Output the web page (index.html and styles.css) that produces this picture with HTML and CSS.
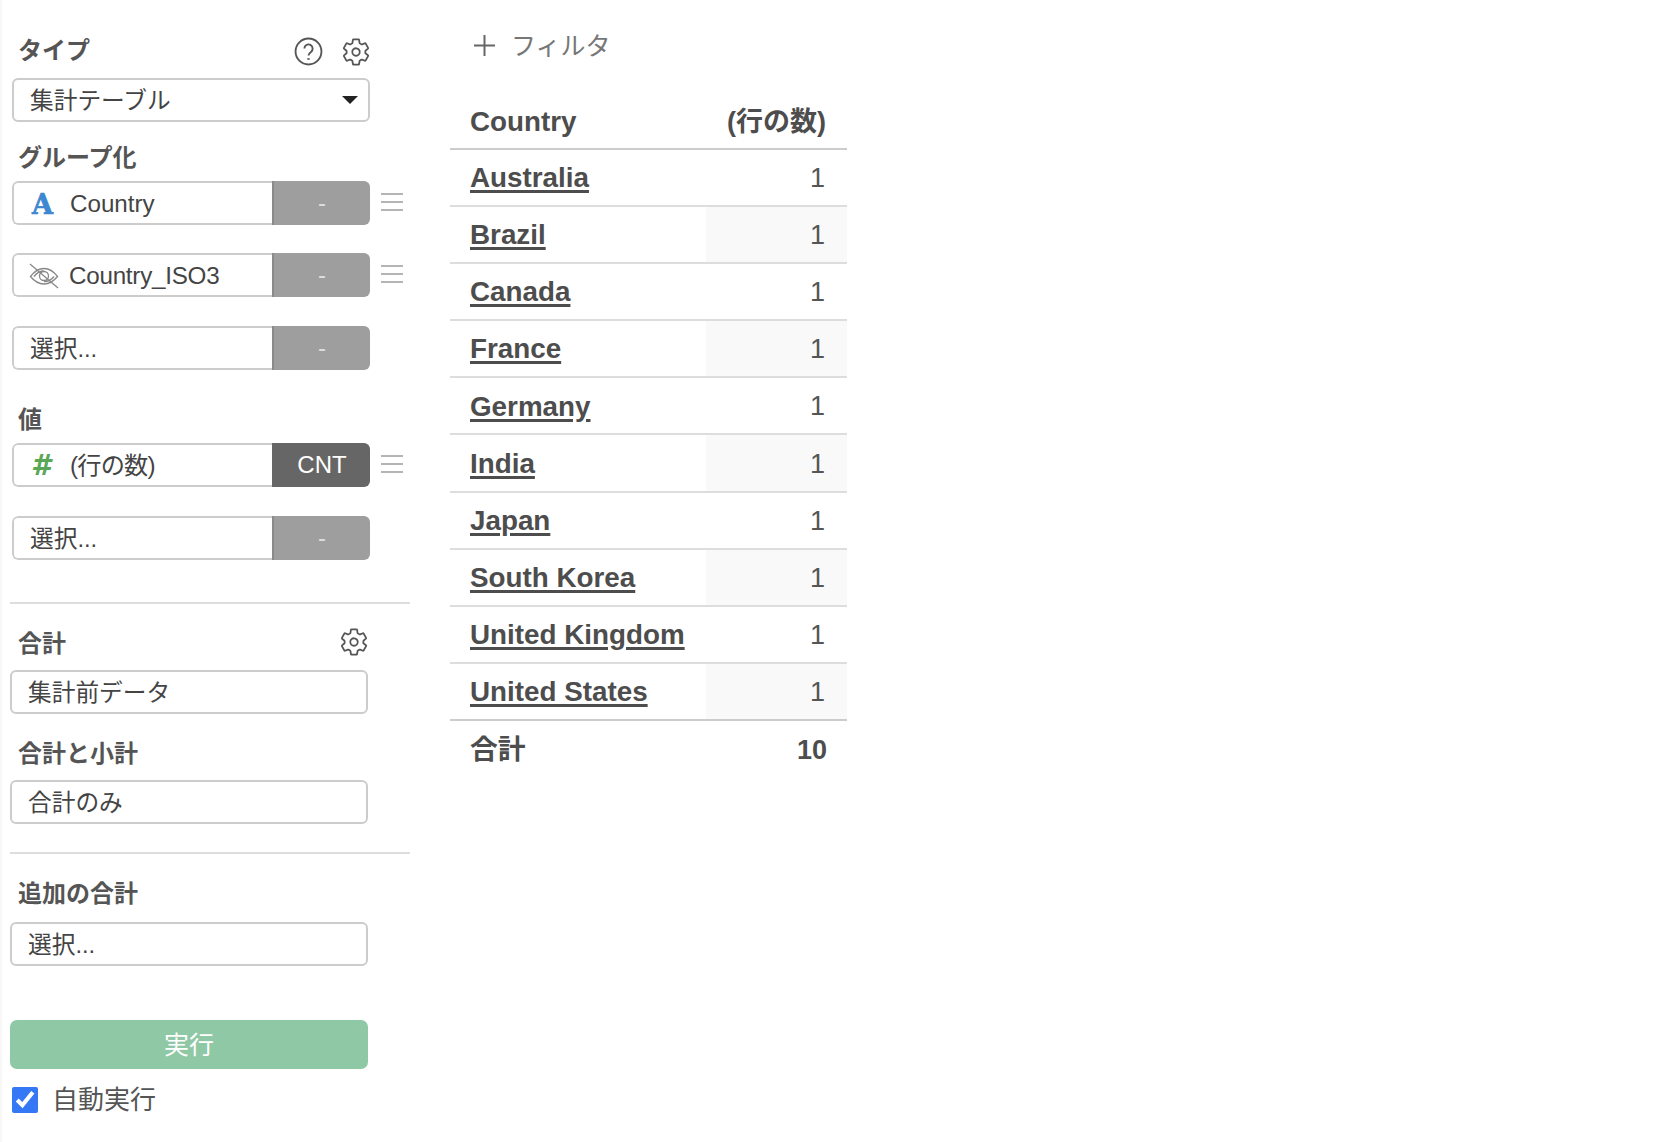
FILE: index.html
```html
<!DOCTYPE html>
<html lang="ja">
<head>
<meta charset="utf-8">
<title>集計テーブル</title>
<link rel="stylesheet" href="styles.css">
</head>
<body>
<div class="page">
  <aside class="side">
    <div class="inset">
      <div class="label-row top">
        <span class="label">タイプ</span>
        <span class="tools">
          <svg class="icon" viewBox="0 0 28 28"><circle cx="14" cy="14" r="12.5"/><path d="M10 11.200a4 4 0 1 1 6.400 3.200c-1.500 1-2.400 1.800-2.400 3.400"/><path class="dot" d="M14 20.400v1.600"/></svg>
          <svg class="gear" viewBox="0 0 512 512"><use href="#gear-shape"/></svg>
        </span>
      </div>
      <div class="select g13"><span>集計テーブル</span><i class="caret"></i></div>

      <div class="label-row g21"><span class="label">グループ化</span></div>
      <div class="pick-row g8">
        <div class="pick"><div class="field"><span class="type type-a">A</span><span>Country</span></div><div class="agg">-</div></div>
        <svg class="menu" viewBox="0 0 22 18"><path d="M0 1h22M0 9h22M0 17h22"/></svg>
      </div>
      <div class="pick-row g28">
        <div class="pick"><div class="field"><svg class="eye" viewBox="0 0 30 26"><path d="M1.500 13.500C6 7.500 10 5.500 15 5.500s9 2 13.500 8c-4.500 5.500-8.500 7.500-13.500 7.500s-9-2-13.500-7.500z"/><path d="M5 13.500C8 9.500 11 8 15 8M25 13.500c-3 4-6 5-10 5"/><circle cx="15" cy="13" r="4.500"/><path d="M1 1l28 24"/></svg><span class="iso">Country_ISO3</span></div><div class="agg">-</div></div>
        <svg class="menu" viewBox="0 0 22 18"><path d="M0 1h22M0 9h22M0 17h22"/></svg>
      </div>
      <div class="pick-row g29">
        <div class="pick"><div class="field plain"><span>選択...</span></div><div class="agg">-</div></div>
      </div>

      <div class="label-row g35"><span class="label">値</span></div>
      <div class="pick-row g8">
        <div class="pick"><div class="field"><span class="type type-n">#</span><span class="tight">(行の数)</span></div><div class="agg on">CNT</div></div>
        <svg class="menu" viewBox="0 0 22 18"><path d="M0 1h22M0 9h22M0 17h22"/></svg>
      </div>
      <div class="pick-row g29">
        <div class="pick"><div class="field plain"><span>選択...</span></div><div class="agg">-</div></div>
      </div>
    </div>

    <hr class="rule g42">

    <div class="label-row lower g25 total-head">
      <span class="label">合計</span>
      <svg class="gear" viewBox="0 0 512 512"><use href="#gear-shape"/></svg>
    </div>
    <div class="select g11"><span>集計前データ</span></div>

    <div class="label-row lower g25"><span class="label">合計と小計</span></div>
    <div class="select g11"><span>合計のみ</span></div>

    <hr class="rule g28">

    <div class="label-row lower g25"><span class="label">追加の合計</span></div>
    <div class="select g13"><span>選択...</span></div>

    <button class="run" type="button">実行</button>
    <label class="auto"><input type="checkbox" checked><span>自動実行</span></label>
  </aside>

  <main class="main">
    <div class="filter">
      <svg class="plus" viewBox="0 0 21 21"><path d="M0 10.500h21M10.500 0v21"/></svg>
      <span>フィルタ</span>
    </div>
    <div class="table">
      <div class="tr head"><div class="c1">Country</div><div class="c2">(行の数)</div></div>
      <div class="tr"><div class="c1"><a href="#">Australia</a></div><div class="c2">1</div></div>
      <div class="tr alt"><div class="c1"><a href="#">Brazil</a></div><div class="c2">1</div></div>
      <div class="tr"><div class="c1"><a href="#">Canada</a></div><div class="c2">1</div></div>
      <div class="tr alt"><div class="c1"><a href="#">France</a></div><div class="c2">1</div></div>
      <div class="tr"><div class="c1"><a href="#">Germany</a></div><div class="c2">1</div></div>
      <div class="tr alt"><div class="c1"><a href="#">India</a></div><div class="c2">1</div></div>
      <div class="tr"><div class="c1"><a href="#">Japan</a></div><div class="c2">1</div></div>
      <div class="tr alt"><div class="c1"><a href="#">South Korea</a></div><div class="c2">1</div></div>
      <div class="tr"><div class="c1"><a href="#">United Kingdom</a></div><div class="c2">1</div></div>
      <div class="tr alt last"><div class="c1"><a href="#">United States</a></div><div class="c2">1</div></div>
      <div class="tr total"><div class="c1">合計</div><div class="c2">10</div></div>
    </div>
  </main>
</div>
<svg class="defs" width="0" height="0"><defs><path id="gear-shape" d="M262.290 192.310a64 64 0 1057.400 57.400 64.130 64.130 0 00-57.400-57.400zM416.390 256a154.340 154.340 0 01-1.530 20.790l45.210 35.460a10.810 10.810 0 012.450 13.750l-42.770 74a10.810 10.810 0 01-13.140 4.590l-44.900-18.080a16.110 16.110 0 00-15.170 1.750A164.480 164.480 0 01325 400.800a15.940 15.940 0 00-8.820 12.140l-6.730 47.890a11.080 11.080 0 01-10.680 9.170h-85.540a11.110 11.110 0 01-10.690-8.870l-6.720-47.820a16.070 16.070 0 00-9-12.220 155.300 155.300 0 01-21.460-12.570 16 16 0 00-15.110-1.710l-44.890 18.070a10.810 10.810 0 01-13.140-4.580l-42.770-74a10.800 10.800 0 012.450-13.750l38.210-30a16.050 16.050 0 006-14.080c-.36-4.170-.58-8.330-.58-12.500s.21-8.270.58-12.350a16 16 0 00-6.070-13.940l-38.190-30A10.810 10.810 0 0149.480 186l42.770-74a10.810 10.810 0 0113.140-4.590l44.900 18.080a16.110 16.110 0 0015.170-1.750A164.480 164.480 0 01187 111.200a15.940 15.940 0 008.820-12.140l6.730-47.890A11.080 11.080 0 01213.230 42h85.540a11.110 11.110 0 0110.690 8.870l6.720 47.820a16.070 16.070 0 009 12.220 155.300 155.300 0 0121.460 12.570 16 16 0 0015.110 1.710l44.890-18.070a10.810 10.810 0 0113.140 4.580l42.770 74a10.800 10.800 0 01-2.450 13.750l-38.210 30a16.050 16.050 0 00-6.050 14.080c.33 4.140.55 8.300.55 12.470z"/></defs></svg>
</body>
</html>
```
FILE: styles.css
```css
* { box-sizing: border-box; }
html, body { margin: 0; padding: 0; background: #fff; }
body {
  font-family: "Liberation Sans", "Noto Sans CJK JP", sans-serif;
  color: #444;
  font-size: 24px;
}
.page { display: flex; min-height: 1142px; border-left: 2px solid #f8f8f8; }
.side { width: 408px; margin-left: 8px; padding-top: 36px; flex: none; }
.inset { padding-left: 2px; }

.label-row { height: 30px; display: flex; align-items: center; justify-content: space-between; padding-left: 6px; }
.top { padding-right: 47px; height: 29px; }
.lower { width: 359px; padding-left: 8px; }
.label { font-size: 24px; font-weight: 700; color: #555; line-height: 30px; }
.tools { display: flex; gap: 18px; align-items: center; margin-top: 2px; }
.icon { width: 29px; height: 29px; fill: none; stroke: #555; stroke-width: 1.800; }
.icon .dot { stroke-width: 2.200; }
.gear { width: 30px; height: 30px; fill: none; stroke: #555; stroke-width: 30; }
.total-head .gear { margin-top: -4px; }

.select {
  width: 358px; height: 44px; border: 2px solid #ccc; border-radius: 6px;
  display: flex; align-items: center; justify-content: space-between;
  padding: 4px 10px 0 16px; background: #fff; line-height: 1; font-size: 23.700px;
}
.caret { width: 0; height: 0; border-left: 8px solid transparent; border-right: 8px solid transparent; border-top: 8px solid #222; margin-top: -4px; }

.pick-row { display: flex; align-items: center; gap: 11px; }
.pick { width: 358px; height: 44px; display: flex; border-radius: 6px; overflow: hidden; }
.field {
  width: 260px; border: 2px solid #ccc; border-right: 0; border-radius: 6px 0 0 6px;
  display: flex; align-items: center; padding: 2px 0 0 18px; line-height: 1; font-size: 24.200px;
}
.field.plain { padding: 4px 0 0 16px; font-size: 23.700px; }
.agg {
  width: 98px; background: #9e9e9e; border-left: 2px solid #8a8a8a; color: #ddd;
  display: flex; align-items: center; justify-content: center; font-size: 24px;
}
.agg.on { background: #666; border-left-color: #666; color: #fff; }
.type { width: 38px; font-weight: 700; line-height: 1; flex: none; }
.type-a { font-family: "DejaVu Serif", serif; font-size: 27px; color: #3d88d0; -webkit-text-stroke: .7px #3d88d0; }
.type-n { font-family: "DejaVu Sans", sans-serif; font-style: italic; font-size: 28px; color: #5aa755; margin-left: -1px; margin-right: 1px; }
.tight { letter-spacing: -.8px; }
.eye { width: 30px; height: 26px; margin-left: -3px; margin-right: 10px; fill: none; stroke: #888; stroke-width: 1.300; flex: none; }
.iso { letter-spacing: -.01em; }
.menu { width: 22px; height: 18px; fill: none; stroke: #b5b5b5; stroke-width: 2; flex: none; margin-top: -2px; }

.rule { border: 0; width: 400px; height: 2px; background: #ddd; margin-left: 0; margin-right: 0; margin-bottom: 0; }

.g8 { margin-top: 8px; }
.g11 { margin-top: 11px; }
.g13 { margin-top: 13px; }
.g21 { margin-top: 21px; }
.g25 { margin-top: 25px; }
.g28 { margin-top: 28px; }
.g29 { margin-top: 29px; }
.g35 { margin-top: 35px; }
.g42 { margin-top: 42px; }

.run {
  display: block; width: 358px; height: 49px; margin-top: 54px; border: 0; border-radius: 7px;
  background: #8fc8a4; color: #fff; font: inherit; font-size: 25px; padding: 0 0 4px;
}
.auto { display: flex; align-items: center; gap: 14px; margin-top: 18px; padding-left: 2px; color: #555; font-size: 26px; line-height: 26px; }
.auto input { width: 26px; height: 26px; margin: 0; accent-color: #3578f6; flex: none; }

.main { padding-left: 32px; width: 430px; flex: none; }
.filter { height: 92px; padding: 29px 0 0 24px; display: flex; align-items: flex-start; gap: 16px; color: #777; font-size: 25px; line-height: 34px; }
.plus { width: 21px; height: 21px; margin-top: 6px; fill: none; stroke: #666; stroke-width: 2; flex: none; }

.table { width: 397px; }
.tr { display: flex; height: 57.100px; border-bottom: 2px solid #ddd; align-items: stretch; }
.c1 { width: 256px; padding: 1px 0 0 20px; display: flex; align-items: center; font-size: 27.800px; font-weight: 700; color: #4d4d4d; line-height: 1; }
.c2 { width: 141px; padding: 2px 22px 0 0; display: flex; align-items: center; justify-content: flex-end; font-size: 27px; color: #555; line-height: 1; }
.c1 a { color: inherit; text-decoration: underline; text-underline-offset: 3px; text-decoration-thickness: 2.500px; }
.alt .c2 { background: #f9f9f9; }
.head { height: 58px; border-bottom-color: #ccc; }
.head .c1, .head .c2 { padding-top: 4px; }
.head .c2 { font-weight: 700; color: #4d4d4d; padding-right: 21px; }
.last { border-bottom-color: #ccc; }
.total { border-bottom: 0; }
.total .c2 { font-weight: 700; color: #4d4d4d; padding-right: 20px; }
.defs { position: absolute; }
```
